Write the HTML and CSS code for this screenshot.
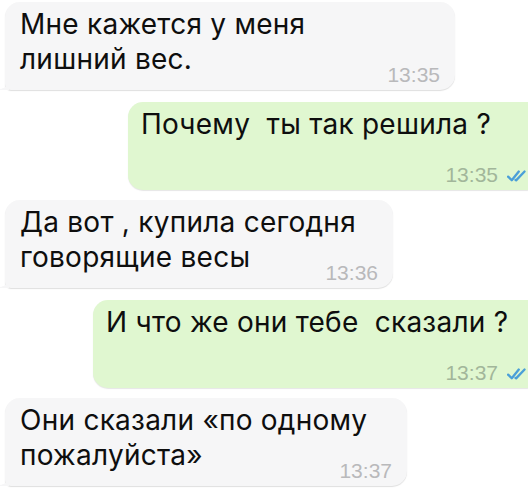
FILE: index.html
```html
<!DOCTYPE html>
<html lang="ru">
<head>
<meta charset="utf-8">
<title>Чат</title>
<link rel="stylesheet" href="styles.css">
</head>
<body>
<div class="chat">
  <div class="msg in w1">
    <p class="line">Мне кажется у меня</p>
    <div class="last">
      <p class="line">лишний вес.</p>
      <div class="meta"><span class="time">13:35</span></div>
    </div>
  </div>
  <div class="msg out w2">
    <p class="line">Почему  ты так решила ?</p>
    <div class="meta"><span class="time">13:35</span><svg class="ticks" viewBox="0 0 18 12" width="20" height="14"><path d="M1 6.6 L4.3 9.8 L10.6 2"/><path d="M7.6 9.5 L8.2 9.9 L15.8 2"/></svg></div>
  </div>
  <div class="msg in w3">
    <p class="line">Да вот , купила сегодня</p>
    <div class="last">
      <p class="line">говорящие весы</p>
      <div class="meta"><span class="time">13:36</span></div>
    </div>
  </div>
  <div class="msg out w4">
    <p class="line">И что же они тебе  сказали ?</p>
    <div class="meta"><span class="time">13:37</span><svg class="ticks" viewBox="0 0 18 12" width="20" height="14"><path d="M1 6.6 L4.3 9.8 L10.6 2"/><path d="M7.6 9.5 L8.2 9.9 L15.8 2"/></svg></div>
  </div>
  <div class="msg in w5">
    <p class="line">Они сказали «по одному</p>
    <div class="last">
      <p class="line">пожалуйста»</p>
      <div class="meta"><span class="time">13:37</span></div>
    </div>
  </div>
</div>
</body>
</html>
```

FILE: styles.css
```css
html, body {
  margin: 0;
  padding: 0;
  background: #ffffff;
  overflow: hidden;
}

body {
  width: 528px;
  height: 500px;
  font-family: Inter, "Liberation Sans", Arial, sans-serif;
  color: #0e0e0e;
}

.chat {
  display: flex;
  flex-direction: column;
  gap: 10px;
  padding-top: 2px;
}

.msg {
  position: relative;
  display: flex;
  flex-direction: column;
  box-sizing: border-box;
  height: 88px;
  padding: 5px 15px 5px 15px;
  border-radius: 15px;
}

.in {
  align-self: flex-start;
  margin-left: 5px;
  background: #f6f6f7;
  border-bottom-left-radius: 6px;
  box-shadow: 0 1px 1px rgba(0, 0, 0, 0.13);
}

.in::before {
  content: "";
  position: absolute;
  left: -5px;
  bottom: 0;
  width: 9px;
  height: 10px;
  background: radial-gradient(circle at 0 0, transparent 8.5px, #f6f6f7 9px);
}

.out {
  align-self: flex-end;
  margin-top: 2px;
  margin-right: -14px;
  padding-left: 13px;
  background: #e0f7d0;
  box-shadow: 0 1px 1px rgba(0, 0, 0, 0.10);
}

.w1 { width: 450px; }
.w2 { width: 414px; }
.w3 { width: 388px; }
.w4 { width: 449px; }
.w5 { width: 402px; }

.line {
  margin: 0;
  font-size: 28px;
  line-height: 35px;
  letter-spacing: 0.25px;
  white-space: pre;
}

.last {
  display: flex;
  justify-content: space-between;
  align-items: flex-start;
}

.meta {
  display: flex;
  align-items: flex-end;
  justify-content: flex-end;
  gap: 9px;
  margin-top: auto;
  line-height: 21px;
}

.last .meta {
  padding-top: 22px;
}

.out .meta {
  align-self: flex-end;
}

.time {
  font-family: "Liberation Sans", Arial, sans-serif;
  font-size: 21px;
  color: #b9b9bb;
}

.out .time {
  color: #a2b69a;
}

.ticks {
  margin-bottom: 2px;
  fill: none;
  stroke: #4a9fd8;
  stroke-width: 2.1;
  stroke-linecap: round;
  stroke-linejoin: round;
}
```
